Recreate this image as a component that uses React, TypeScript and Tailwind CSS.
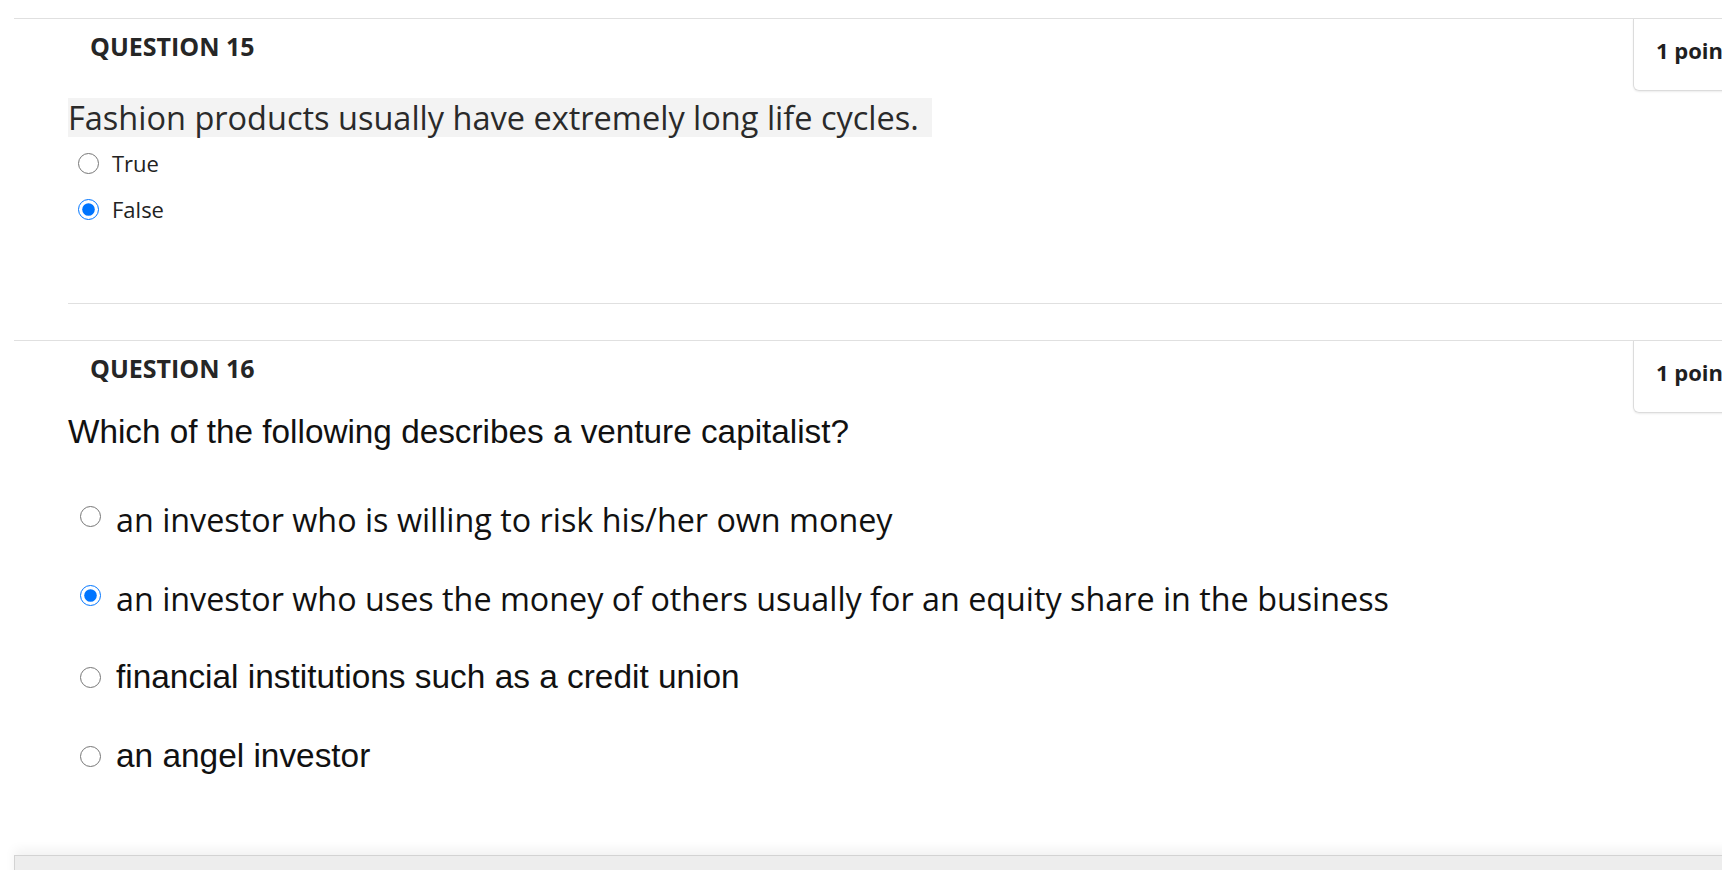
import React from "react"

type Option = { label: string; checked?: boolean; font: "trebuchet" | "arial" }

const q16Options: Option[] = [
  { label: "an investor who is willing to risk his/her own money", font: "trebuchet" },
  { label: "an investor who uses the money of others usually for an equity share in the business", checked: true, font: "trebuchet" },
  { label: "financial institutions such as a credit union", font: "arial" },
  { label: "an angel investor", font: "arial" },
]

const QuestionHeader: React.FC<{ number: number }> = ({ number }) => (
  <div className="flex h-[72px] items-start">
    <div className="mt-[10px] pl-[76px] font-['Open_Sans',sans-serif] text-[25px] font-bold leading-[34px] text-[#262626]">
      QUESTION {number}
    </div>
    <div className="ml-auto h-[72px] w-[167px] shrink-0 overflow-hidden whitespace-nowrap rounded-bl-[6px] border-x border-b border-[#dcdcdc] pl-[22px] pt-[16px] font-['Open_Sans',sans-serif] text-[22px] font-bold leading-[30px] text-[#1f1f1f] shadow-[0_1px_2px_rgba(0,0,0,0.08)]">
      1 points
    </div>
  </div>
)

export default function App() {
  return (
    <div className="h-[870px] w-full overflow-hidden bg-white">
      <div className="ml-[14px] w-[1786px] pt-[18px]">
        {/* question 15 */}
        <div className="border-t border-[#e0e0e0]">
          <QuestionHeader number={15} />
          <div className="ml-[54px] border-b border-[#e0e0e0] pb-[79px]">
            <div className="mt-[7px]">
              <span className="inline-block bg-[#f3f3f3] pr-[13px] font-['Open_Sans',sans-serif] text-[32.5px] leading-[39px] text-[#2a2a2a]">
                Fashion products usually have extremely long life cycles.
              </span>
            </div>
            <div className="mt-[11px] flex flex-col gap-[16px]">
              {["True", "False"].map((label) => (
                <label key={label} className="flex h-[30px] items-center">
                  <input
                    type="radio"
                    name="q15"
                    defaultChecked={label === "False"}
                    className="m-0 ml-[10px] h-[21px] w-[21px] shrink-0"
                  />
                  <span className="ml-[13px] font-['Open_Sans',sans-serif] text-[22px] leading-[30px] text-[#222]">
                    {label}
                  </span>
                </label>
              ))}
            </div>
          </div>
        </div>

        {/* question 16 */}
        <div className="mt-[36px] border-t border-[#e0e0e0]">
          <QuestionHeader number={16} />
          <div className="ml-[54px]">
            <div className="font-['Liberation_Sans',Arial,sans-serif] text-[33.3px] leading-[38px] text-[#111]">
              Which of the following describes a venture capitalist?
            </div>
            <div className="mt-[50px] flex flex-col gap-[43px]">
              {q16Options.map((opt) => (
                <label key={opt.label} className="flex h-[36px] items-center">
                  <input
                    type="radio"
                    name="q16"
                    defaultChecked={opt.checked}
                    className={
                      opt.font === "trebuchet"
                        ? "m-0 mb-[6px] ml-[12px] h-[21px] w-[21px] shrink-0"
                        : "m-0 ml-[12px] h-[21px] w-[21px] shrink-0"
                    }
                  />
                  <span
                    className={
                      opt.font === "trebuchet"
                        ? "ml-[15px] whitespace-nowrap font-['Open_Sans',sans-serif] text-[32.3px] leading-[36px] text-[#111]"
                        : "ml-[15px] whitespace-nowrap font-['Liberation_Sans',Arial,sans-serif] text-[33.4px] leading-[36px] text-[#111]"
                    }
                  >
                    {opt.label}
                  </span>
                </label>
              ))}
            </div>
          </div>
        </div>

        {/* footer bar */}
        <div className="mt-[81px] h-[40px] border-l border-t border-[#d3d3d3] bg-[#ededed] shadow-[0_-6px_10px_rgba(0,0,0,0.05)]" />
      </div>
    </div>
  )
}
